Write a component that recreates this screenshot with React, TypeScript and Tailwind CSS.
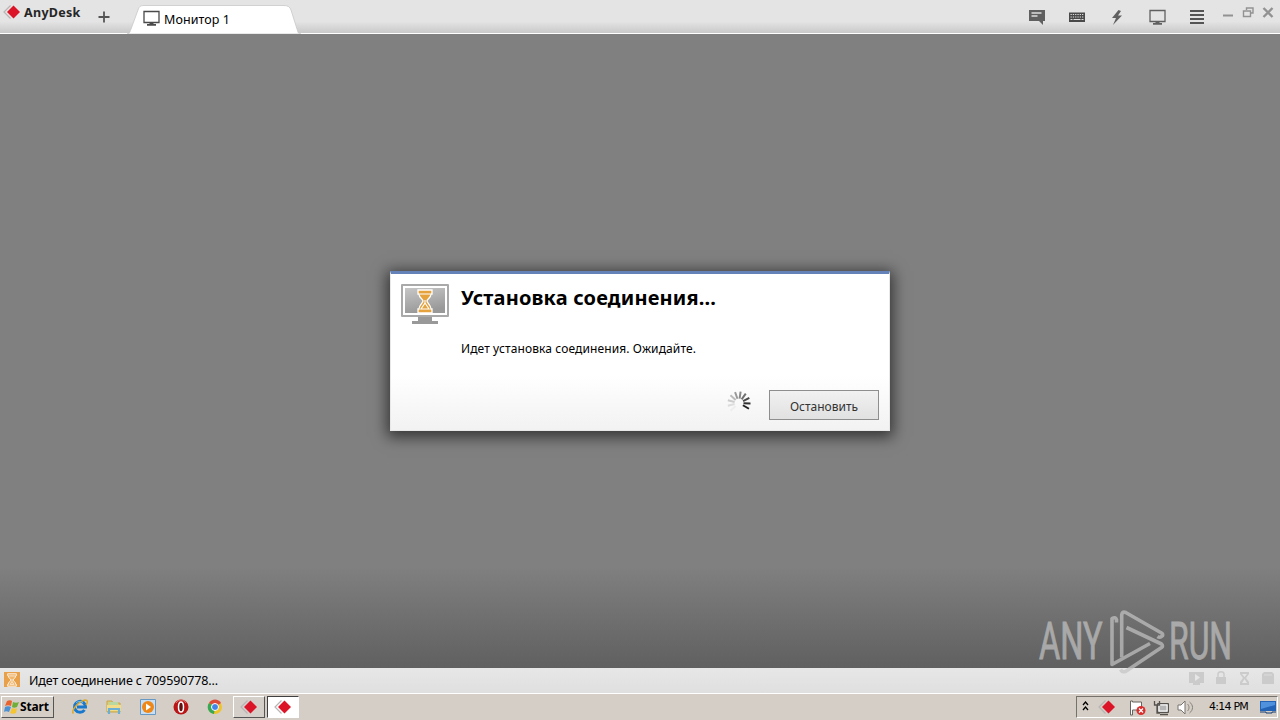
import type { ReactNode } from "react";

const noto = "font-['Noto_Sans','Liberation_Sans',sans-serif]";

function AnyDeskMark({ className }: { className?: string }) {
  return (
    <svg viewBox="0 0 18 14" className={className}>
      <path d="M7.5 0.5 1 7l6.500 6.500" fill="none" stroke="#b9b4b4" strokeWidth="1.200" />
      <path d="M10.500 0.500 17 7l-6.500 6.500L4 7z" fill="#dc1428" />
    </svg>
  );
}

function MonitorIcon({ color = "#4a4a4a" }: { color?: string }) {
  return (
    <svg width="17" height="16" viewBox="0 0 17 16" fill="none">
      <path d="M1 1.500h15v11H1z" stroke={color} strokeWidth="1.300" />
      <path d="M6.500 13h4v1H13v1.800H4V14h2.500z" fill={color} />
    </svg>
  );
}

function Hourglass({ className, color }: { className?: string; color: string }) {
  return (
    <svg viewBox="0 0 16 22" className={className}>
      <path
        d="M1 1h14v3h-1c0 4-4 5-4 7s4 3 4 7h1v3H1v-3h1c0-4 4-5 4-7S2 8 2 4H1z"
        fill={color}
        stroke="#fff"
        strokeWidth="1.300"
      />
      <path d="M3.500 4.500h9M8 9.500v4M8 13.500l-3 4.500h6z" fill="none" stroke="#fff" strokeWidth="1" />
    </svg>
  );
}

function TitleBar() {
  return (
    <header className="flex h-[34px] shrink-0 border-b border-white bg-linear-to-b from-[#e4e4e4] from-65% to-[#c9c9c9]">
      <div className="flex w-[127px] items-start pl-[3px] pt-[5px]">
        <AnyDeskMark className="h-[14px] w-[18px]" />
        <span className={`ml-[3px] w-[60px] text-[12.500px] leading-[15px] font-bold tracking-[0.300px] text-[#262626] ${noto}`}>
          AnyDesk
        </span>
        <svg width="12" height="12" viewBox="0 0 12 12" className="ml-[14px] mt-[6px]">
          <path d="M6 0.500v11M0.500 6h11" stroke="#555" strokeWidth="1.800" />
        </svg>
      </div>
      <div className="relative flex w-[174px] pl-[16px] pt-[10px]">
        <svg width="174" height="30" viewBox="0 0 174 30" className="absolute left-0 top-[4px]">
          <path d="M0 30c3 0 3-3 4-5L11 6c1-3 2-4.500 6-4.500h140c4 0 6 1.500 7 4.500l6 19c1 3 1 5 4 5z" fill="#fff" stroke="#c8c8c8" strokeWidth="0.800" />
        </svg>
        <div className="relative flex">
          <MonitorIcon />
          <span className={`ml-[4px] mt-px text-[12.500px] leading-[18px] tracking-[0.080px] text-black ${noto}`}>Монитор 1</span>
        </div>
      </div>
      <div className="ml-auto flex pr-[6px]">
        <div className="mr-[18px] flex w-[175px] justify-between pt-[9px]">
          <svg width="16" height="16" viewBox="0 0 16 16">
            <path d="M0 1h16v11h-2v4l-4-4H0z" fill="#606060" />
            <path d="M2.500 4h10M2.500 7h6" stroke="#ddd" strokeWidth="1.300" />
          </svg>
          <svg width="16" height="16" viewBox="0 0 16 16">
            <path d="M0 3.500h16v9.500H0z" fill="#4a4a4a" />
            <path d="M1.500 5.500h13M1.500 8h13" stroke="#ddd" strokeWidth="1.200" strokeDasharray="1.300 1" />
            <path d="M1.500 10.500h2m1 0h7m1 0h2" stroke="#ddd" strokeWidth="1.200" />
          </svg>
          <svg width="16" height="16" viewBox="0 0 16 16">
            <path d="M9.500 1 3 9h4l-3 7 9-9.500H9l3-4.500z" fill="#606060" />
          </svg>
          <MonitorIcon color="#606060" />
          <svg width="14" height="16" viewBox="0 0 14 16">
            <path d="M0 2h14M0 6h14M0 10h14M0 14h14" stroke="#555" strokeWidth="1.900" />
          </svg>
        </div>
        <svg width="52" height="14" viewBox="0 0 52 14" fill="none" stroke="#929292" className="mt-[6px]">
          <path d="M1 9.500h10" strokeWidth="2" />
          <path d="M24.500 4V2h6.500v5h-2M21.500 5h7v5.500h-7z" strokeWidth="1.400" />
          <path d="m41.500 2 9 9m0-9-9 9" strokeWidth="2.400" />
        </svg>
      </div>
    </header>
  );
}

const spokes = ["#202020", "#303030", "#484848", "#707070", "#888", "#999", "#bbb", "#ccc", "#ddd", "#eee"];

function Spinner() {
  return (
    <svg width="24" height="24" viewBox="-12 -12 24 24">
      {spokes.map((color, i) => (
        <path key={i} d="M4.500 0h7" stroke={color} strokeWidth="2" transform={`rotate(${30 - i * 28})`} />
      ))}
    </svg>
  );
}

function ConnectDialog() {
  return (
    <section className={`flex h-[160px] w-[500px] flex-col border border-t-[3px] border-[#e8e8e8] border-t-[#6482b8] bg-linear-to-b from-white from-65% to-[#f2f2f2] shadow-[0_3px_14px_3px_rgba(0,0,0,0.600)] ${noto}`}>
      <div className="flex flex-1 pl-[10px] pt-[9px]">
        <svg width="48" height="42" viewBox="0 0 48 42">
          <defs>
            <linearGradient id="screen" x1="0" y1="0" x2="0.300" y2="1">
              <stop stopColor="#c6c6c6" />
              <stop offset="1" stopColor="#999" />
            </linearGradient>
          </defs>
          <path d="M1 2h46v31H1z" fill="#fff" stroke="#a9a9a9" strokeWidth="2" strokeLinejoin="round" />
          <path d="M4 5h40v25H4z" fill="url(#screen)" />
          <path d="M17 34h14v4h6v3H11v-3h6z" fill="#999" />
          <svg x="16" y="5" width="16" height="26" viewBox="0 0 16 26">
            <path d="M1 2h14v4h-1c0 4-4 5-4 7s4 4 4 8h1v4H1v-4h1c0-4 4-6 4-8S2 10 2 6H1z" fill="#e6a23c" stroke="#fff" strokeWidth="1.300" />
            <path d="M3 6h10M8 12v3l-4 6h8l-4-6" fill="none" stroke="#fff" strokeWidth="1.100" />
          </svg>
        </svg>
        <div className="ml-[12px] flex flex-col text-black">
          <h1 className="w-max text-[20px] leading-[30px] font-bold tracking-[0.170px]">Установка соединения...</h1>
          <p className="mt-[27px] w-max text-[12px] leading-[18px] tracking-[0.110px]">Идет установка соединения. Ожидайте.</p>
        </div>
      </div>
      <div className="flex justify-end pb-[10px] pr-[10px]">
        <div className="mr-[18px] mt-px">
          <Spinner />
        </div>
        <button className="h-[30px] w-[110px] border border-[#8e8e8e] bg-linear-to-b from-[#f1f1f1] to-[#e1e1e1] pt-[4px] text-[12px] text-[#333]">
          Остановить
        </button>
      </div>
    </section>
  );
}

function StatusBar() {
  return (
    <div className="flex h-[25px] shrink-0 items-center bg-linear-to-b from-[#e7e7e7] to-[#dfdfdf] pl-[4px] pr-[5px]">
      <div className="-mt-[2px] flex h-[15px] w-[16px] items-center justify-center bg-[#e9a04b]">
        <Hourglass color="#f0b66d" className="h-[14px] w-[10px]" />
      </div>
      <span className={`ml-[9px] text-[12.500px] leading-[18px] tracking-[-0.110px] text-black ${noto}`}>
        Идет соединение с 709590778...
      </span>
      <svg width="88" height="16" viewBox="0 0 88 16" fill="#cbcbcb" className="-mt-[5px] ml-auto">
        <path d="M2 2h15v11h-4v2H6v-2H2z" />
        <path d="m8 4 5 3.500L8 11z" fill="#e6e6e6" />
        <path d="M29 7h10v7H29z" />
        <path d="M31 8V4c0-3 6-3 6 0v4" fill="none" stroke="#cbcbcb" strokeWidth="1.500" />
        <path d="M53 2h9v2l-3 4 3 4v3h-9v-3l3-4-3-4z" />
        <path d="M55 4h5l-2.500 3zM57.500 9 60 13h-5z" fill="#e6e6e6" />
        <path d="M75 4l2-2h8l2 2v10H75z" />
        <path d="M77 5h8" stroke="#dcdcdc" />
      </svg>
    </div>
  );
}

function TaskButton({ active }: { active?: boolean }) {
  return (
    <div
      className={`flex h-[22px] w-[32px] items-center justify-center border ${
        active
          ? "border-[#404040] border-r-white border-b-white bg-white"
          : "border-white border-r-[#555] border-b-[#555] bg-[#d4cfc8]"
      }`}
    >
      <AnyDeskMark className="h-[14px] w-[18px]" />
    </div>
  );
}

function LaunchIcon({ children }: { children: ReactNode }) {
  return (
    <svg width="18" height="18" viewBox="0 0 18 18" fill="none" className="shrink-0">
      {children}
    </svg>
  );
}

function Taskbar() {
  return (
    <footer className="flex h-[27px] shrink-0 items-center border-t border-white bg-[#d5cec6] font-['DejaVu_Sans','Liberation_Sans',sans-serif]">
      <button className="ml-px flex h-[22px] w-[53px] items-center border border-white border-r-[#555] border-b-[#555] pl-[2px]">
        <svg width="16" height="16" viewBox="0 0 16 16">
          <path d="M3 2c2-1 4-1 5 0L7 7c-2-1-4-1-6 0z" fill="#e8632d" />
          <path d="M9 3c2 1 4 1 6 0l-2 5c-2 1-4 1-5 0z" fill="#70ae38" />
          <path d="M1 8c2-1 4-1 6 0l-2 5c-2-1-4-1-5 0z" fill="#4b91d3" />
          <path d="M8 9c2 1 4 1 5 0l-1 5c-2 1-4 1-6 0z" fill="#f4c431" />
        </svg>
        <span className={`text-[12px] font-bold tracking-[-0.150px] ${noto}`}>Start</span>
      </button>
      <div className="ml-[17px] flex w-[153px] justify-between">
        <LaunchIcon>
          <path d="M13.500 12A5.500 5.500 0 1 1 14.500 9H6" stroke="#1878cd" strokeWidth="3" />
          <path d="M2.500 15.500C-1 13 8 3 14 2c3 0 3 2 1 5" stroke="#dca92c" strokeWidth="1.500" />
          <path d="M5 5c2-2 5-2 7 0" stroke="#76c5ee" />
        </LaunchIcon>
        <LaunchIcon>
          <path d="M2 3h5l1 2h7v9H2z" fill="#e7c968" stroke="#c5a64c" />
          <path d="M4 4h9v4H4z" fill="#b7d9a1" />
          <path d="M2 7h14v6H2z" fill="#f2dc88" />
          <path d="M4 16v-5h10v5" stroke="#6bafd4" strokeWidth="2.200" />
        </LaunchIcon>
        <LaunchIcon>
          <path d="M1.500 1.500h15v15h-15z" fill="#c9def0" stroke="#6898c4" />
          <circle cx="9" cy="9" r="6" fill="#ef8718" />
          <path d="m7 5.500 5 3.500-5 3.500z" fill="#fff" />
        </LaunchIcon>
        <LaunchIcon>
          <circle cx="9" cy="9" r="7.500" fill="#b91516" />
          <path d="M4 5c2-4 8-4 10 0" stroke="#e47970" />
          <ellipse cx="9" cy="9" rx="2.500" ry="5" fill="#651010" stroke="#fff" strokeWidth="1.500" />
        </LaunchIcon>
        <LaunchIcon>
          <circle cx="9" cy="9" r="7" fill="#efc42b" />
          <path d="M9 9 3 5a7 7 0 0 1 12 0z" fill="#dd4b39" />
          <path d="M9 9 3 5a7 7 0 0 0 5 11z" fill="#37a853" />
          <circle cx="9" cy="9" r="3.500" fill="#4285e8" stroke="#fff" />
        </LaunchIcon>
      </div>
      <div className="ml-[9px] flex gap-[2px]">
        <TaskButton />
        <TaskButton active />
      </div>
      <div className="ml-auto mr-[2px] flex h-[22px] w-[202px] items-center border border-white border-l-[#77716b] border-t-[#77716b] pl-[5px]">
        <svg width="7" height="10" viewBox="0 0 7 10" fill="none" stroke="#000" strokeWidth="1.300" className="-mt-[2px]">
          <path d="m1 4 2.500-3L6 4M1 9l2.500-3L6 9" />
        </svg>
        <AnyDeskMark className="ml-[9px] h-[14px] w-[18px]" />
        <svg width="67" height="17" viewBox="0 0 67 17" fill="none" className="ml-[12px]">
          <path d="M2.500 16V2h2v1h9v8h-9v5z" fill="#fff" stroke="#68645f" />
          <circle cx="13" cy="11.500" r="4.500" fill="#d92e2e" />
          <path d="m11 9.500 4 4m0-4-4 4" stroke="#fff" strokeWidth="1.300" />
          <path d="M29.500 4.500h11v9h-11z" fill="#b5b5b5" stroke="#55514d" />
          <path d="M31 6h8v6h-8z" stroke="#fff" />
          <path d="M32 15.500h8M26.500 2v4h5V2m-2.500 4v8h3" stroke="#55514d" strokeWidth="1.300" />
          <path d="M50 6h3l4-4v13l-4-4h-3z" fill="#fff" stroke="#77736e" />
          <path d="M59.500 5c2 2 2 5 0 7m2-9c4 3 4 8 0 11" stroke="#85817b" />
        </svg>
        <span className="ml-[14px] mt-px w-[43px] whitespace-nowrap text-[11px] tracking-[-0.750px]">4:14 PM</span>
        <svg width="16" height="14" viewBox="0 0 16 14" className="ml-[8px]">
          <path d="M0 1h16v10H0z" fill="#2363b5" />
          <path d="M1 2h14v3L1 9z" fill="#4f91dc" />
          <path d="M0 12h6v1h6v-1h4" fill="none" stroke="#173e73" />
        </svg>
      </div>
    </footer>
  );
}

function Watermark() {
  return (
    <svg width="220" height="74" viewBox="0 0 220 74" className="absolute left-[1035px] top-[604px] opacity-70">
      <g fill="#c4c4c4" stroke="#c4c4c4" strokeWidth="0.900" fontFamily="Roboto, sans-serif" fontSize="51">
        <text transform="translate(4 55) scale(0.638 1)">ANY</text>
        <text transform="translate(134 55) scale(0.625 1)">RUN</text>
      </g>
      <g fill="none" stroke="#c4c4c4" strokeWidth="3.600" strokeLinejoin="round">
        <path d="M81.500 18.500v-3q-1-3-4.500-1v46l38-21" />
        <path d="M86.700 53.500V11q.5-4 4-2.500L126.500 29q2.500 2 0 3.500-2 1.500-4 0" />
        <path d="m91.500 23.500 35 16.500q2 2 0 3.500L92 66.500q-4 3-6.500-1" />
      </g>
    </svg>
  );
}

export default function App() {
  return (
    <div className="relative flex h-[720px] w-[1280px] flex-col overflow-hidden">
      <TitleBar />
      <main className="flex flex-1 items-center justify-center bg-linear-to-b from-[#808080] from-84% to-[#606060]">
        <ConnectDialog />
      </main>
      <StatusBar />
      <Taskbar />
      <Watermark />
    </div>
  );
}
